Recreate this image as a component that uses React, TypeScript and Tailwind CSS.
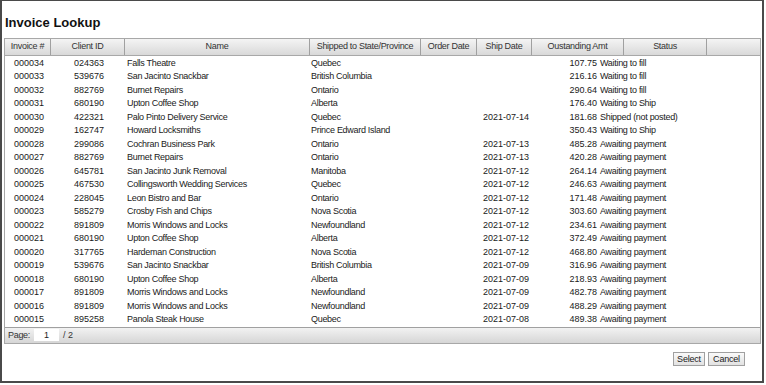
import React from 'react';

interface Invoice {
  no: string;
  client: string;
  name: string;
  state: string;
  shipDate: string;
  amount: string;
  status: string;
}

const rows: Invoice[] = [
  { no: '000034', client: '024363', name: 'Falls Theatre', state: 'Quebec', shipDate: '', amount: '107.75', status: 'Waiting to fill' },
  { no: '000033', client: '539676', name: 'San Jacinto Snackbar', state: 'British Columbia', shipDate: '', amount: '216.16', status: 'Waiting to fill' },
  { no: '000032', client: '882769', name: 'Burnet Repairs', state: 'Ontario', shipDate: '', amount: '290.64', status: 'Waiting to fill' },
  { no: '000031', client: '680190', name: 'Upton Coffee Shop', state: 'Alberta', shipDate: '', amount: '176.40', status: 'Waiting to Ship' },
  { no: '000030', client: '422321', name: 'Palo Pinto Delivery Service', state: 'Quebec', shipDate: '2021-07-14', amount: '181.68', status: 'Shipped (not posted)' },
  { no: '000029', client: '162747', name: 'Howard Locksmiths', state: 'Prince Edward Island', shipDate: '', amount: '350.43', status: 'Waiting to Ship' },
  { no: '000028', client: '299086', name: 'Cochran Business Park', state: 'Ontario', shipDate: '2021-07-13', amount: '485.28', status: 'Awaiting payment' },
  { no: '000027', client: '882769', name: 'Burnet Repairs', state: 'Ontario', shipDate: '2021-07-13', amount: '420.28', status: 'Awaiting payment' },
  { no: '000026', client: '645781', name: 'San Jacinto Junk Removal', state: 'Manitoba', shipDate: '2021-07-12', amount: '264.14', status: 'Awaiting payment' },
  { no: '000025', client: '467530', name: 'Collingsworth Wedding Services', state: 'Quebec', shipDate: '2021-07-12', amount: '246.63', status: 'Awaiting payment' },
  { no: '000024', client: '228045', name: 'Leon Bistro and Bar', state: 'Ontario', shipDate: '2021-07-12', amount: '171.48', status: 'Awaiting payment' },
  { no: '000023', client: '585279', name: 'Crosby Fish and Chips', state: 'Nova Scotia', shipDate: '2021-07-12', amount: '303.60', status: 'Awaiting payment' },
  { no: '000022', client: '891809', name: 'Morris Windows and Locks', state: 'Newfoundland', shipDate: '2021-07-12', amount: '234.61', status: 'Awaiting payment' },
  { no: '000021', client: '680190', name: 'Upton Coffee Shop', state: 'Alberta', shipDate: '2021-07-12', amount: '372.49', status: 'Awaiting payment' },
  { no: '000020', client: '317765', name: 'Hardeman Construction', state: 'Nova Scotia', shipDate: '2021-07-12', amount: '468.80', status: 'Awaiting payment' },
  { no: '000019', client: '539676', name: 'San Jacinto Snackbar', state: 'British Columbia', shipDate: '2021-07-09', amount: '316.96', status: 'Awaiting payment' },
  { no: '000018', client: '680190', name: 'Upton Coffee Shop', state: 'Alberta', shipDate: '2021-07-09', amount: '218.93', status: 'Awaiting payment' },
  { no: '000017', client: '891809', name: 'Morris Windows and Locks', state: 'Newfoundland', shipDate: '2021-07-09', amount: '482.78', status: 'Awaiting payment' },
  { no: '000016', client: '891809', name: 'Morris Windows and Locks', state: 'Newfoundland', shipDate: '2021-07-09', amount: '488.29', status: 'Awaiting payment' },
  { no: '000015', client: '895258', name: 'Panola Steak House', state: 'Quebec', shipDate: '2021-07-08', amount: '489.38', status: 'Awaiting payment' },
];

const headers = [
  'Invoice #',
  'Client ID',
  'Name',
  'Shipped to State/Province',
  'Order Date',
  'Ship Date',
  'Oustanding Amt',
  'Status',
  '',
];

export default function App() {
  return (
    <div className="w-[766px] h-[385px] bg-white font-['Liberation_Sans',Arial,sans-serif]">
      {/* Window frame */}
      <div className="w-[764px] h-[383px] border-t border-x-2 border-b-2 border-[#4a4a4a] flex flex-col pl-[2px] pr-[1px]">
        {/* Title */}
        <h1 className="h-[37px] pt-[13px] pl-[1px] text-[13px] font-bold text-[#111] leading-[18px]">
          Invoice Lookup
        </h1>

        {/* Grid */}
        <div className="h-[306px] border border-[#a8a8a8] flex flex-col bg-white">
          {/* Header */}
          <div className="h-[18px] grid grid-cols-[46px_74px_185px_111px_56px_55px_92px_83px_1fr] bg-gradient-to-b from-[#f4f4f4] to-[#d9d9d9] border-b border-[#a8a8a8] text-[9px] text-[#333] tracking-[-0.3px]">
            {headers.map((h, i) => (
              <div
                key={i}
                className={`flex items-center justify-center whitespace-nowrap ${i < headers.length - 1 ? 'border-r border-[#a0a0a0]' : ''}`}
              >
                {h}
              </div>
            ))}
          </div>

          {/* Body */}
          <div className="flex-1 pt-[1px] text-[9px] text-[#1a1a1a]">
            {rows.map((r) => (
              <div
                key={r.no}
                className="h-[13.5px] grid grid-cols-[65px_55px_184px_112px_59px_65px_52px_1fr] items-center leading-none whitespace-nowrap"
              >
                <div className="pl-[9px]">{r.no}</div>
                <div className="pl-[4px]">{r.client}</div>
                <div className="pl-[2px] tracking-[-0.3px]">{r.name}</div>
                <div className="pl-[2px] tracking-[-0.3px]">{r.state}</div>
                <div />
                <div className="pl-[3px]">{r.shipDate}</div>
                <div className="text-right">{r.amount}</div>
                <div className="pl-[3px] tracking-[-0.3px]">{r.status}</div>
              </div>
            ))}
          </div>

          {/* Pager */}
          <div className="h-[18px] flex items-center bg-gradient-to-b from-[#f2f2f2] to-[#d6d6d6] border-t border-[#a0a0a0] text-[9px] text-[#333]">
            <span className="pl-[3px] pr-[4px] tracking-[-0.3px]">Page:</span>
            <div className="w-[25px] h-[12px] bg-white flex items-center justify-center text-[#222]">1</div>
            <span className="pl-[4px]">/ 2</span>
          </div>
        </div>

        {/* Buttons */}
        <div className="flex justify-end gap-[3px] pt-[8px] pr-[16px]">
          <button className="w-[32px] h-[14px] border border-[#a0a0a0] bg-gradient-to-b from-[#fafafa] to-[#e2e2e2] text-[9px] text-[#222] leading-none tracking-[-0.2px]">
            Select
          </button>
          <button className="w-[37px] h-[14px] border border-[#a0a0a0] bg-gradient-to-b from-[#fafafa] to-[#e2e2e2] text-[9px] text-[#222] leading-none tracking-[-0.2px]">
            Cancel
          </button>
        </div>
      </div>
    </div>
  );
}
